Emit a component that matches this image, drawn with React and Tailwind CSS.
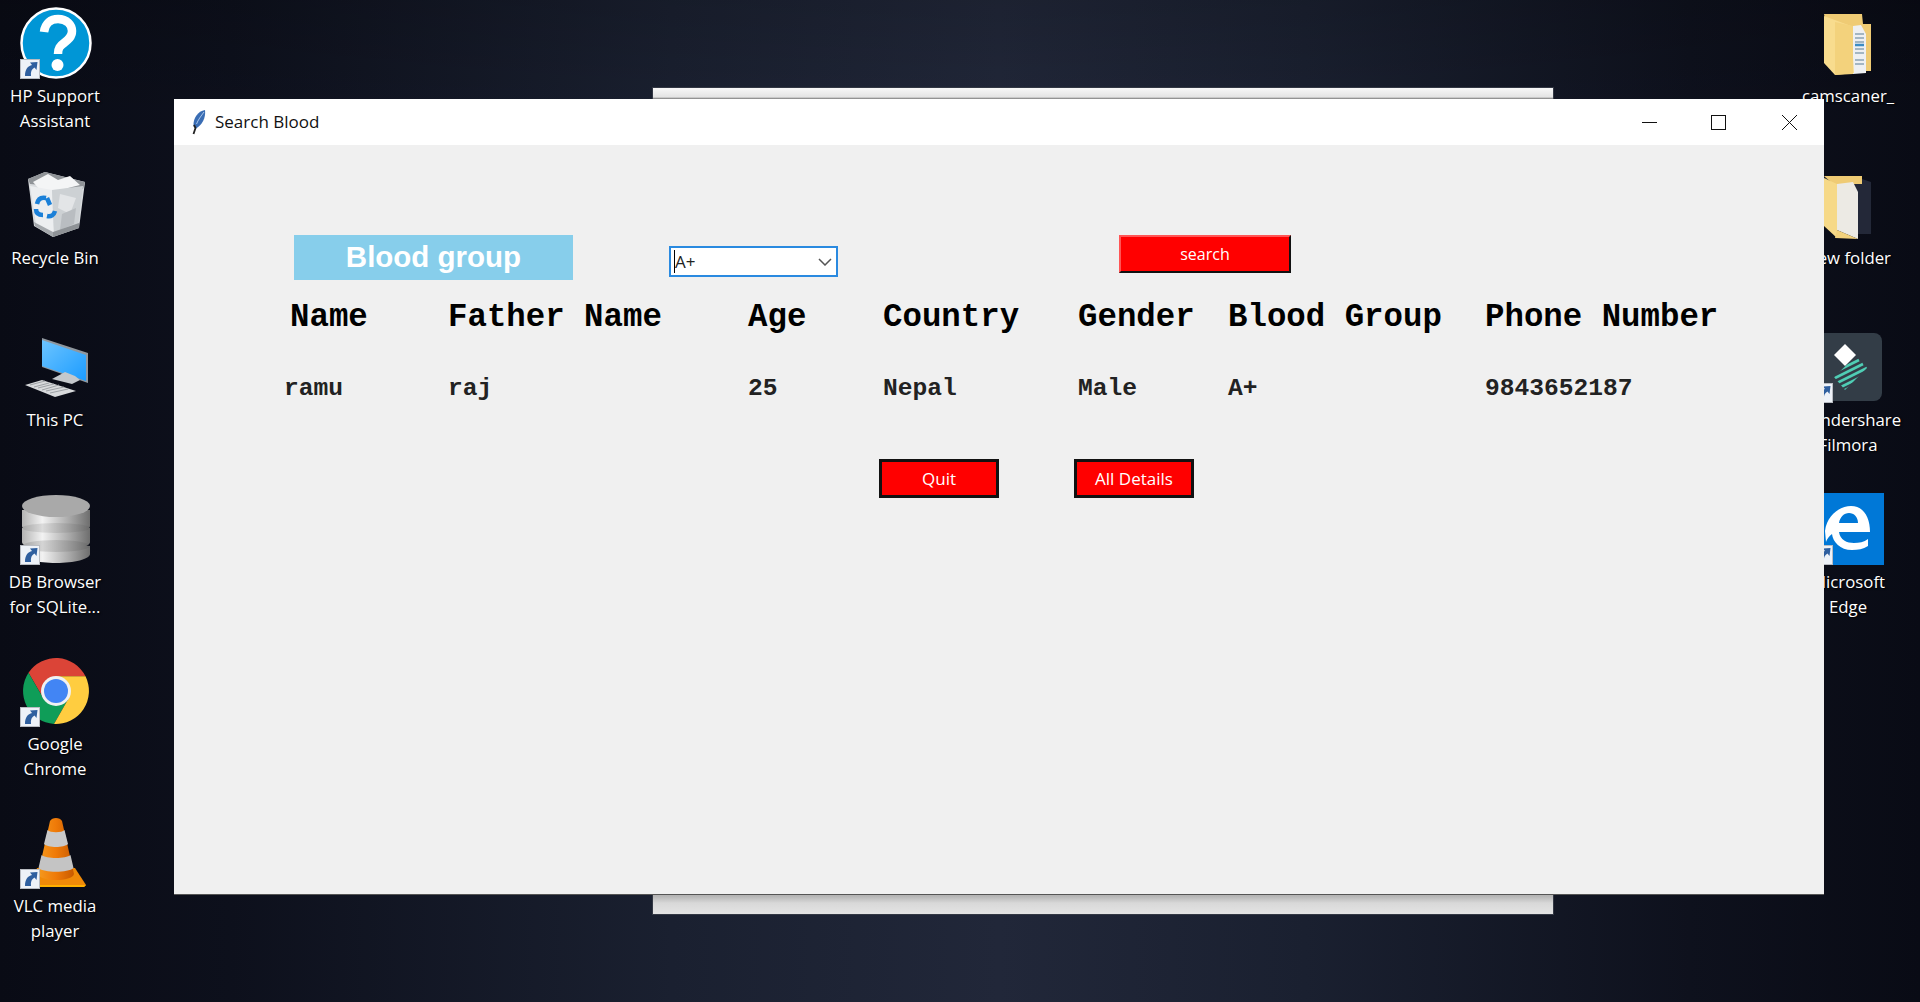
import React from "react";

const Shortcut = () => (
  <g>
    <rect x="20.5" y="59.5" width="19" height="19" fill="#eef2f8" stroke="#b9bcc2" />
    <path d="M25 76 C25 69 28 66 32 65 L30 62.5 L37.5 62 L36.5 70 L34.5 67.5 C31.5 69 30.5 72 31 76 Z" fill="#2f5f9f" />
  </g>
);

const HpIcon = () => (
  <svg width="110" height="83" viewBox="0 0 110 83">
    <circle cx="56" cy="43" r="34.5" fill="#0096d6" stroke="#ffffff" strokeWidth="2.5" />
    <path d="M44 32 C45 23 51 19 58 19 C67 19 72 25 72 31 C72 37 68 40 64 43 C60 46 58 48 58 54" fill="none" stroke="#ffffff" strokeWidth="8.5" />
    <circle cx="57.5" cy="65" r="6" fill="#ffffff" />
    <Shortcut />
  </svg>
);

const RecycleIcon = () => (
  <svg width="110" height="83" viewBox="0 0 110 83">
    <polygon points="28,17 45,10 85,20 79,66 53,75 34,64" fill="#d9dcdf" />
    <polygon points="28,17 45,10 85,20 83,27 52,24 30,22" fill="#8f9397" />
    <polygon points="33,20 48,12 58,18 70,14 80,23 60,28 40,28" fill="#f4f5f6" />
    <polygon points="30,24 52,28 54,72 36,62" fill="#eceef0" />
    <polygon points="52,28 83,24 78,64 54,72" fill="#cdd1d4" />
    <polygon points="60,32 76,36 70,52 58,46" fill="#e3e5e7" />
    <polygon points="62,52 76,46 74,62 60,68" fill="#b9bdc1" />
    <polygon points="34,60 53,70 53,75 35,64" fill="#a4a8ac" />
    <polygon points="53,70 79,61 79,66 53,75" fill="#8e9296" />
    <path d="M37 42 C38 37 41 35 46 36 M47 36 L50 43 M36 47 C36 51 38 53 43 53 M47 54 C51 55 54 53 55 49" fill="none" stroke="#1b80d8" strokeWidth="4.5" />
  </svg>
);

const PcIcon = () => (
  <svg width="110" height="83" viewBox="0 0 110 83">
    <defs>
      <linearGradient id="pcScreen" x1="0" y1="0" x2="1" y2="1">
        <stop offset="0" stopColor="#6cc4ff" />
        <stop offset="1" stopColor="#1c9cff" />
      </linearGradient>
    </defs>
    <polygon points="42,14 88,29 88,59 42,43" fill="#8f979e" />
    <polygon points="42,16 86,31 86,57 42,42" fill="url(#pcScreen)" />
    <polygon points="65,48 75,52 80,56 72,60 52,55" fill="#c4c8cc" />
    <polygon points="25,61 42,56 76,67 55,73" fill="#d8dadc" />
    <path d="M30 61 L45 57 M34 63 L49 59 M38 64 L54 60 M42 66 L59 61 M46 67 L64 63 M50 69 L68 65" stroke="#9da1a5" strokeWidth="1" />
  </svg>
);

const DbIcon = () => (
  <svg width="110" height="83" viewBox="0 0 110 83">
    <defs>
      <linearGradient id="dbSide" x1="0" y1="0" x2="1" y2="0">
        <stop offset="0" stopColor="#b4b4b4" />
        <stop offset="0.3" stopColor="#f2f2f2" />
        <stop offset="0.7" stopColor="#a8a8a8" />
        <stop offset="1" stopColor="#6e6e6e" />
      </linearGradient>
    </defs>
    <path d="M22 60 L22 68 C22 73 38 77 56 77 C74 77 90 73 90 68 L90 60 Z" fill="url(#dbSide)" />
    <path d="M22 42 L22 56 C22 61 38 65 56 65 C74 65 90 61 90 56 L90 42 Z" fill="url(#dbSide)" />
    <ellipse cx="56" cy="60" rx="34" ry="6" fill="#55555530" />
    <path d="M22 24 L22 40 C22 45 38 49 56 49 C74 49 90 45 90 40 L90 24 Z" fill="url(#dbSide)" />
    <ellipse cx="56" cy="42" rx="34" ry="5" fill="#55555525" />
    <ellipse cx="56" cy="20" rx="34" ry="11" fill="#a9a9a9" />
    <Shortcut />
  </svg>
);

const ChromeIcon = () => (
  <svg width="110" height="83" viewBox="0 0 110 83">
    <path d="M85.5 28.3 A33 33 0 0 0 28.5 24.8 L43.3 50.35 L56 43 L56 28.3 Z" fill="#db4437" />
    <path d="M28.5 24.8 A33 33 0 0 0 54 75.9 L68.7 50.35 L56 43 L43.3 50.35 Z" fill="#0f9d58" />
    <path d="M54 75.9 A33 33 0 0 0 85.5 28.3 L56 28.3 L56 43 L68.7 50.35 Z" fill="#ffcd40" />
    <circle cx="56" cy="43" r="15" fill="#f1f1f1" />
    <circle cx="56" cy="43" r="12" fill="#4285f4" />
    <Shortcut />
  </svg>
);

const VlcIcon = () => (
  <svg width="110" height="83" viewBox="0 0 110 83">
    <defs>
      <linearGradient id="coneFill" x1="0" y1="0" x2="1" y2="0">
        <stop offset="0" stopColor="#f59a1e" />
        <stop offset="0.5" stopColor="#ef7a08" />
        <stop offset="1" stopColor="#c85a00" />
      </linearGradient>
    </defs>
    <polygon points="37,58 75,58 86,75 84,77 30,77" fill="#f08a08" />
    <polygon points="30,75 86,75 84,77 30,77" fill="#ffb000" />
    <path d="M50 11 C52 7 60 7 62 11 L74 64 C72 72 40 72 38 64 Z" fill="url(#coneFill)" />
    <path d="M47.5 20 C50 23 62 23 64.5 20 L68 34 C64 38 48 38 44 34 Z" fill="#c9c9c9" />
    <path d="M41.5 45 C46 49 66 49 70.5 45 L73.5 58 C68 63 44 63 38.5 58 Z" fill="#c4c4c4" />
    <Shortcut />
  </svg>
);

const FolderDocIcon = () => (
  <svg width="110" height="83" viewBox="0 0 110 83">
    <polygon points="31,14 69,14 70,24 78,24 78,71 42,71" fill="#efcb74" />
    <polygon points="60,26 68,25 73,34 73,73 60,74" fill="#eef0f2" />
    <path d="M62 34 H71 M62 38 H71 M62 42 H71 M62 49 H71 M62 53 H71 M62 60 H71 M62 64 H71" stroke="#8aa2b4" strokeWidth="1.5" />
    <path d="M62 45 H71" stroke="#3b8cc4" strokeWidth="2.5" />
    <polygon points="31,16 58,26 61,73 42,75 31,63" fill="#f8dc8e" />
    <polygon points="42,22 60,26 60,74 42,75" fill="#f3d27c" />
  </svg>
);

const FolderPaperIcon = () => (
  <svg width="110" height="83" viewBox="0 0 110 83">
    <polygon points="31,14 69,14 69,17 78,20 78,72 50,72" fill="#232838" />
    <polygon points="31,14 69,14 69,22 40,22" fill="#efcb74" />
    <polygon points="44,22 60,20 65,30 65,77 44,68" fill="#eceae4" />
    <polygon points="31,16 44,22 44,76 31,64" fill="#f6d988" />
    <polygon points="44,68 65,77 42,76" fill="#f3d27c" />
  </svg>
);

const FilmoraIcon = () => (
  <svg width="110" height="83" viewBox="0 0 110 83">
    <defs>
      <clipPath id="filmoraClip">
        <polygon points="41,53 63,32 75,43 52,66" />
      </clipPath>
    </defs>
    <rect x="21" y="9" width="68" height="68" rx="8" fill="#333d47" />
    <polygon points="52,20 63,31 52,42 41,31" fill="#ffffff" />
    <g clipPath="url(#filmoraClip)" stroke="#4fcdb4" strokeWidth="2.6">
      <path d="M38 50 L66 36 M38 56 L70 40 M38 62 L74 44 M42 66 L78 48 M48 68 L80 52" />
    </g>
    <Shortcut />
  </svg>
);

const EdgeIcon = () => (
  <svg width="110" height="83" viewBox="0 0 110 83">
    <rect x="19" y="7" width="72" height="72" fill="#0078d7" />
    <path
      fillRule="evenodd"
      d="M32 45 C34 29 47 20 58 20 C71 20 77 32 77 46 L46 46 C47 54 54 57 61 57 C66 57 71 56 75 53 L75 60 C70 63 65 64 59 64 C47 64 40 56 39 48 C36 50 34 53 33 56 Z M46 37 L65 37 C65 31 61 27 56 27 C51 27 47 31 46 37 Z"
      fill="#ffffff"
    />
    <Shortcut />
  </svg>
);

const DesktopIcon = ({ icon, lines }) => (
  <div className="w-[110px] h-[162px] shrink-0">
    {icon}
    <div className="text-center text-white text-[16.8px] leading-[25px] whitespace-nowrap font-['Open_Sans',sans-serif] [text-shadow:1px_1px_2px_#000]">
      {lines.map((l) => (
        <div key={l}>{l}</div>
      ))}
    </div>
  </div>
);

const leftIcons = [
  { icon: <HpIcon />, lines: ["HP Support", "Assistant"] },
  { icon: <RecycleIcon />, lines: ["Recycle Bin"] },
  { icon: <PcIcon />, lines: ["This PC"] },
  { icon: <DbIcon />, lines: ["DB Browser", "for SQLite..."] },
  { icon: <ChromeIcon />, lines: ["Google", "Chrome"] },
  { icon: <VlcIcon />, lines: ["VLC media", "player"] },
];

const rightIcons = [
  { icon: <FolderDocIcon />, lines: ["camscaner_"] },
  { icon: <FolderPaperIcon />, lines: ["New folder"] },
  { icon: <FilmoraIcon />, lines: ["Wondershare", "Filmora"] },
  { icon: <EdgeIcon />, lines: ["Microsoft", "Edge"] },
];

const Feather = () => (
  <svg width="16" height="26" viewBox="0 0 16 26">
    <path d="M14 1 C7 2 2 9 2.5 17 L5 19.5 C11 16 15 9 14 1 Z" fill="#3a6db4" />
    <path d="M13 3 C10 7 7 11 5.5 15" stroke="#a9c6ea" strokeWidth="1" fill="none" />
    <path d="M3 16 L4.5 19 L2.5 25" stroke="#222222" strokeWidth="1.8" fill="none" />
  </svg>
);

const columns = [
  { head: "Name", value: "ramu" },
  { head: "Father Name", value: "raj" },
  { head: "Age", value: "25" },
  { head: "Country", value: "Nepal" },
  { head: "Gender", value: "Male" },
  { head: "Blood Group", value: "A+" },
  { head: "Phone Number", value: "9843652187" },
];

const SearchWindow = () => (
  <div className="absolute left-[174px] top-[99px] w-[1650px] h-[796px] flex flex-col border-b border-b-[#555555]">
    <div className="h-[46px] bg-white flex items-center shrink-0">
      <div className="ml-[17px] w-[24px]">
        <Feather />
      </div>
      <span className="text-[17px] text-[#111111] font-['Open_Sans',sans-serif]">Search Blood</span>
      <div className="ml-auto flex items-center text-black">
        <svg width="15" height="15" viewBox="0 0 15 15" className="mr-[54px]">
          <path d="M0 7.5 H15" stroke="#111111" strokeWidth="1" />
        </svg>
        <svg width="15" height="15" viewBox="0 0 15 15" className="mr-[56px]">
          <rect x="0.5" y="0.5" width="14" height="14" fill="none" stroke="#111111" />
        </svg>
        <svg width="15" height="15" viewBox="0 0 15 15" className="mr-[27px]">
          <path d="M0 0 L15 15 M15 0 L0 15" stroke="#111111" strokeWidth="1" />
        </svg>
      </div>
    </div>

    <div className="flex-1 bg-[#f0f0f0] pt-[90px]">
      <div className="flex items-start pl-[120px]">
        <div className="w-[279px] h-[45px] bg-[#87ceeb] text-white font-bold text-[29.5px] flex items-center justify-center font-['Liberation_Sans',sans-serif]">
          Blood group
        </div>
        <div className="ml-[96px] mt-[11px] w-[169px] h-[31px] bg-white border-2 border-[#2a8ae0] flex items-center pl-[3px] pr-[4px]">
          <span className="w-px h-[23px] bg-black" />
          <span className="text-[17px] text-[#222222] font-['Open_Sans',sans-serif]">A+</span>
          <svg width="14" height="8" viewBox="0 0 14 8" className="ml-auto">
            <path d="M1 1 L7 7 L13 1" fill="none" stroke="#555555" strokeWidth="1.5" />
          </svg>
        </div>
        <button className="ml-[281px] w-[172px] h-[38px] bg-[#ff0000] text-white text-[16px] border-2 border-t-[#ff5555] border-l-[#ff5555] border-r-[#111111] border-b-[#111111] font-['Open_Sans',sans-serif]">
          search
        </button>
      </div>

      <div className="grid grid-cols-[164px_300px_135px_195px_150px_257px_auto] pl-[110px] mt-[13px] text-black font-['Liberation_Mono',monospace] font-bold whitespace-pre">
        {columns.map((c, i) => (
          <div key={c.head} className={`h-[50px] text-[32.4px] leading-[50px] ${i === 0 ? "pl-[6px]" : ""}`}>
            {c.head}
          </div>
        ))}
        {columns.map((c) => (
          <div key={c.value} className="mt-[21px] h-[50px] text-[24.6px] leading-[50px] text-[#222222]">
            {c.value}
          </div>
        ))}
      </div>

      <div className="flex pl-[705px] mt-[45px] gap-[75px]">
        <button className="w-[120px] h-[39px] bg-[#ff0000] border-[3px] border-[#111111] text-white text-[17px] font-['Open_Sans',sans-serif]">
          Quit
        </button>
        <button className="w-[120px] h-[39px] bg-[#ff0000] border-[3px] border-[#111111] text-white text-[17px] font-['Open_Sans',sans-serif]">
          All Details
        </button>
      </div>
    </div>
  </div>
);

const App = () => {
  return (
    <div className="relative w-[1920px] h-[1002px] overflow-hidden flex justify-between pr-[17px] bg-[linear-gradient(to_bottom,rgba(0,0,0,0.14),transparent_12%),linear-gradient(to_right,#090b15_0%,#0d101c_12%,#1a2030_35%,#212739_52%,#1a2030_68%,#0e111d_88%,#090b15_100%)]">
      <div className="flex flex-col">
        {leftIcons.map((d) => (
          <DesktopIcon key={d.lines[0]} icon={d.icon} lines={d.lines} />
        ))}
      </div>
      <div className="flex flex-col">
        {rightIcons.map((d) => (
          <DesktopIcon key={d.lines[0]} icon={d.icon} lines={d.lines} />
        ))}
      </div>

      {/* window behind the search window */}
      <div className="absolute left-[652px] top-[87px] w-[902px] h-[828px] border border-[#333844] bg-[linear-gradient(to_bottom,#f8f8f8_0px,#e4e4e4_9px,#777777_11px,#b4b4b4_808px,#d8d8d8_815px,#e6e6e6_828px)]" />

      <SearchWindow />
    </div>
  );
};

export default App;
